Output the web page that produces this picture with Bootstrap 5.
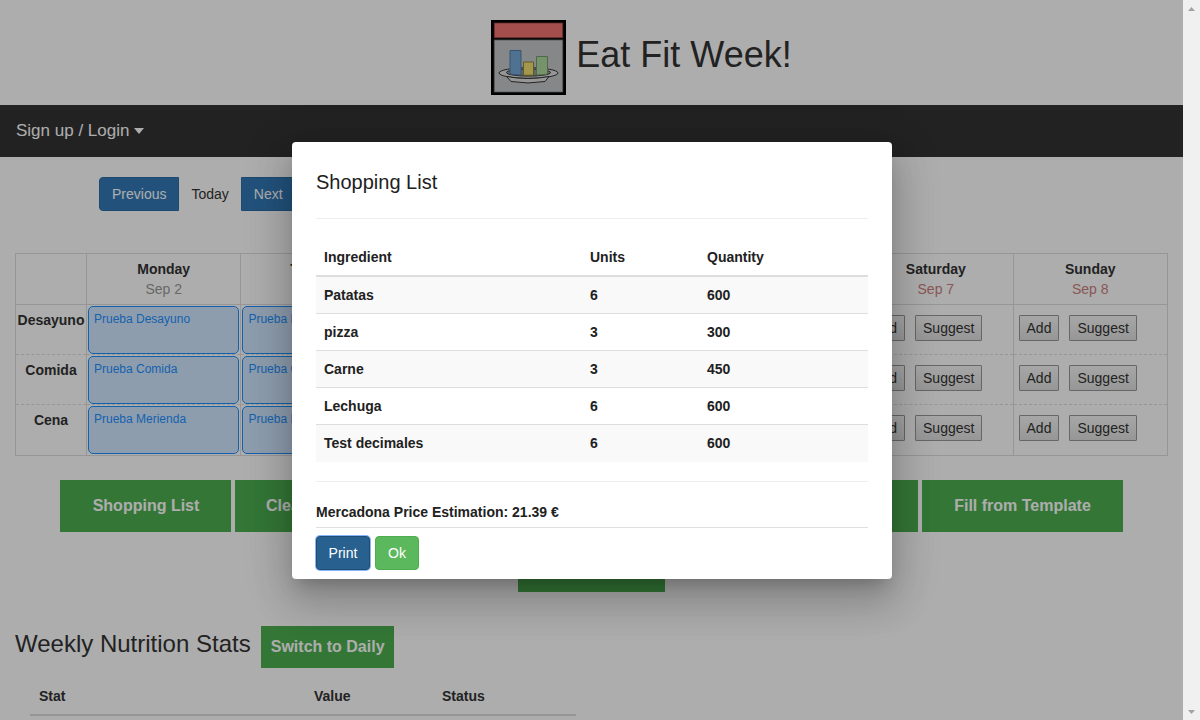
<!DOCTYPE html>
<html lang="en">
<head>
<meta charset="utf-8">
<meta name="viewport" content="width=device-width, initial-scale=1">
<title>Eat Fit Week!</title>
<link rel="stylesheet" href="https://cdn.jsdelivr.net/npm/bootstrap@5.3.0/dist/css/bootstrap.min.css">
<style>
body{font:14px/20px "Liberation Sans",Arial,sans-serif;color:#333;height:720px;overflow:hidden;background:#fff}
.page{width:1183px;height:720px}
.masthead{height:105px;padding:10px 0 0 100px}
.site-title{font-size:36px;line-height:40px;font-weight:400;margin:0 0 6px 10px}
.topbar{height:52px;background:#333;font-size:17px;padding:0 16px;color:#fff}
.caret{width:0;height:0;border:5.5px solid transparent;border-top:6px solid #fff;border-bottom:0;margin:0 0 1px 5px}
.week-nav{margin:20px 0 0 99px}
.btn{font-size:14px;line-height:20px;padding:6px 12px;border-radius:4px}
.btn-today{color:#333}
.btn-blue{background:#337ab7!important;border-color:#2e6da4!important;color:#fff!important}
.planner{width:1153px;margin:42px 0 0 15px;table-layout:fixed;border-collapse:collapse;border:1px solid #ddd}
.planner td,.planner th{border:1px solid #ddd;padding:0;vertical-align:top;text-align:center}
.planner th{height:51px;padding-top:5px;font-weight:400}
.planner td{height:50px;border-top-style:dashed;border-bottom-style:dashed}
.planner tr:nth-child(2) td{border-top-style:solid}
.planner tr:last-child td{border-bottom-style:solid;height:51px}
.planner td.meal{font-weight:700;padding-top:5px}
.date{color:#999}
.weekend{color:#cc8080}
.event{height:48px;margin:1px 1px 0;border:1px solid #1e90ff;border-radius:5px;background:#d1e8ff;color:#1e90ff;font-size:12px;line-height:16px;text-align:left;padding:4px 5px;overflow:hidden;white-space:nowrap}
.mini{font-size:14px;line-height:20px;height:26px;padding:2px 7px;color:#333;background:linear-gradient(#f6f6f6,#dedede);border:1px solid #999;border-radius:1px}
.mini+.mini{margin-left:10px}
.slots{padding:10px 0 0 5px;text-align:left;white-space:nowrap}
.green{background:#4caf50;color:#fff;font-weight:700;font-size:16px;line-height:22px;border:0;border-radius:0;padding:15px 0;height:52px;text-align:center}
.actions{margin-top:24px;padding:0 60px;row-gap:8px;column-gap:4px}
.w-list{width:171px;padding-left:1px}
.w-clear{width:171px;padding-left:31px;text-align:left}
.w-mid{width:508px}
.w-fill{width:201px}
.w-last{width:147px}
.stats{margin:34px 0 0 15px}
.stats h2{font-size:24px;line-height:26px;margin:5px 10px 0 0;font-weight:400}
.stats .green{padding:10px 0 10px 1px;height:42px;width:133px}
.stat-table{width:546px;margin:0 0 0 30px;border-bottom:2px solid #ddd;padding:18px 9px 8px;height:48px;font-weight:700}
.c1{width:275px}
.c2{width:128px}
.sb{width:17px;height:720px;background:#f0f0f0;padding:7px 0 6px}
.up,.down{width:7px;height:4px;background:#a3a3a3;clip-path:polygon(50% 0,100% 100%,0 100%)}
.down{clip-path:polygon(0 0,100% 0,50% 100%)}
.veil{position:absolute;left:0;top:0;width:1183px;height:720px;background:rgba(0,0,0,.32);padding:1px 0 0 1px}
.sheet{width:600px;height:437px;background:#fff;border-radius:4px;padding:24px;color:#212121;box-shadow:0 11px 15px -7px rgba(0,0,0,.2),0 24px 38px 3px rgba(0,0,0,.14),0 9px 46px 8px rgba(0,0,0,.12)}
.sheet h3{font-size:20px;line-height:32px;margin:0 0 20px;font-weight:400}
.rule{height:1px;background:#eee}
.shopping{width:552px;margin:20px 0 19px;table-layout:fixed;font-weight:700;border-collapse:collapse}
.shopping td,.shopping th{padding:8px;height:37px;border-top:1px solid #ddd}
.shopping th{border-top:0;border-bottom:2px solid #ddd}
.shopping tbody tr:nth-child(odd){background:#f9f9f9}
.price{font-weight:700;border-bottom:1px solid #e0e0e0;padding:20px 0 5px;margin-bottom:8px}
.dialog-btns{gap:5px}
.dialog-btns .btn{padding:6px 0;width:54px}
.dialog-btns .ok{width:44px}
.print{background:#286090!important;border-color:#204d74!important;color:#fff!important;box-shadow:0 0 0 1px #8ab4f8}
.ok{background:#5cb85c!important;border-color:#4cae4c!important;color:#fff!important}
</style>
</head>
<body class="d-flex position-relative">
<div class="page">
 <header class="masthead d-flex justify-content-center align-items-center">
  <svg width="75" height="75" viewBox="0 0 75 75">
   <rect width="75" height="75" fill="#000"/><rect x="3.2" y="3" width="68.6" height="14.8" fill="#f37373" stroke="#843d3d" stroke-width=".8"/>
   <rect x="3.2" y="20" width="68.6" height="52" fill="#c6c8ca" stroke="#77797b" stroke-width=".8"/>
   <g stroke="#333" stroke-width="1"><ellipse cx="37.5" cy="53" rx="29.5" ry="5.3" fill="#ddd"/><path d="M15.5 56.5 20 61.5Q37 64.5 54 61.5L58 56.5Q37 60.5 15.5 56.5Z" fill="#ddd"/><ellipse cx="37.5" cy="52.5" rx="22" ry="3.6" fill="#999"/></g>
   <g stroke-width="1"><path d="M19 30.5h11V55q-5 0-11-1z" fill="#76a9d8" stroke="#4f7ca5"/><path d="M32.5 42h10v13.2h-10z" fill="#f0df70" stroke="#8d833d"/><path d="M45.5 36.5h11V54q-5 1-11 1z" fill="#adda9f" stroke="#77996e"/></g>
  </svg>
  <h1 class="site-title">Eat Fit Week!</h1>
 </header>
 <nav class="topbar d-flex align-items-center">Sign up / Login<span class="caret"></span></nav>
 <div class="week-nav btn-group"><button class="btn btn-blue">Previous</button><button class="btn btn-today">Today</button><button class="btn btn-blue">Next</button></div>
 <table class="planner">
  <colgroup><col style="width:71px"><col><col><col><col><col><col><col></colgroup>
  <tr><th></th><th><b>Monday</b><div class="date">Sep 2</div></th><th><b>Tuesday</b><div class="date">Sep 3</div></th><th></th><th></th><th></th><th><b>Saturday</b><div class="weekend">Sep 7</div></th><th><b>Sunday</b><div class="weekend">Sep 8</div></th></tr>
  <tr><td class="meal">Desayuno</td><td><div class="event">Prueba Desayuno</div></td><td><div class="event">Prueba Desayuno</div></td><td></td><td></td><td></td><td><div class="slots d-flex"><button class="mini">Add</button><button class="mini">Suggest</button></div></td><td><div class="slots d-flex"><button class="mini">Add</button><button class="mini">Suggest</button></div></td></tr>
  <tr><td class="meal">Comida</td><td><div class="event">Prueba Comida</div></td><td><div class="event">Prueba Comida</div></td><td></td><td></td><td></td><td><div class="slots d-flex"><button class="mini">Add</button><button class="mini">Suggest</button></div></td><td><div class="slots d-flex"><button class="mini">Add</button><button class="mini">Suggest</button></div></td></tr>
  <tr><td class="meal">Cena</td><td><div class="event">Prueba Merienda</div></td><td><div class="event">Prueba Merienda</div></td><td></td><td></td><td></td><td><div class="slots d-flex"><button class="mini">Add</button><button class="mini">Suggest</button></div></td><td><div class="slots d-flex"><button class="mini">Add</button><button class="mini">Suggest</button></div></td></tr>
 </table>
 <div class="actions d-flex flex-wrap justify-content-center">
  <button class="green w-list">Shopping List</button><button class="green w-clear">Clear</button><div class="green w-mid"></div><button class="green w-fill">Fill from Template</button><div class="green w-last"></div>
 </div>
 <section>
  <div class="stats d-flex"><h2>Weekly Nutrition Stats</h2><button class="green">Switch to Daily</button></div>
  <div class="stat-table d-flex"><span class="c1">Stat</span><span class="c2">Value</span><span>Status</span></div>
 </section>
</div>
<aside class="sb d-flex flex-column align-items-center justify-content-between"><i class="up"></i><i class="down"></i></aside>
<div class="veil d-flex align-items-center justify-content-center">
 <div class="sheet">
  <h3>Shopping List</h3><div class="rule"></div>
  <table class="shopping">
   <colgroup><col style="width:266px"><col style="width:117px"><col></colgroup>
   <thead><tr><th>Ingredient</th><th>Units</th><th>Quantity</th></tr></thead>
   <tbody><tr><td>Patatas</td><td>6</td><td>600</td></tr><tr><td>pizza</td><td>3</td><td>300</td></tr><tr><td>Carne</td><td>3</td><td>450</td></tr><tr><td>Lechuga</td><td>6</td><td>600</td></tr><tr><td>Test decimales</td><td>6</td><td>600</td></tr></tbody>
  </table>
  <div class="rule"></div><div class="price">Mercadona Price Estimation: 21.39 €</div>
  <div class="dialog-btns d-flex"><button class="btn print">Print</button><button class="btn ok">Ok</button></div>
 </div>
</div>
<script src="https://cdn.jsdelivr.net/npm/bootstrap@5.3.0/dist/js/bootstrap.bundle.min.js"></script>
</body>
</html>
